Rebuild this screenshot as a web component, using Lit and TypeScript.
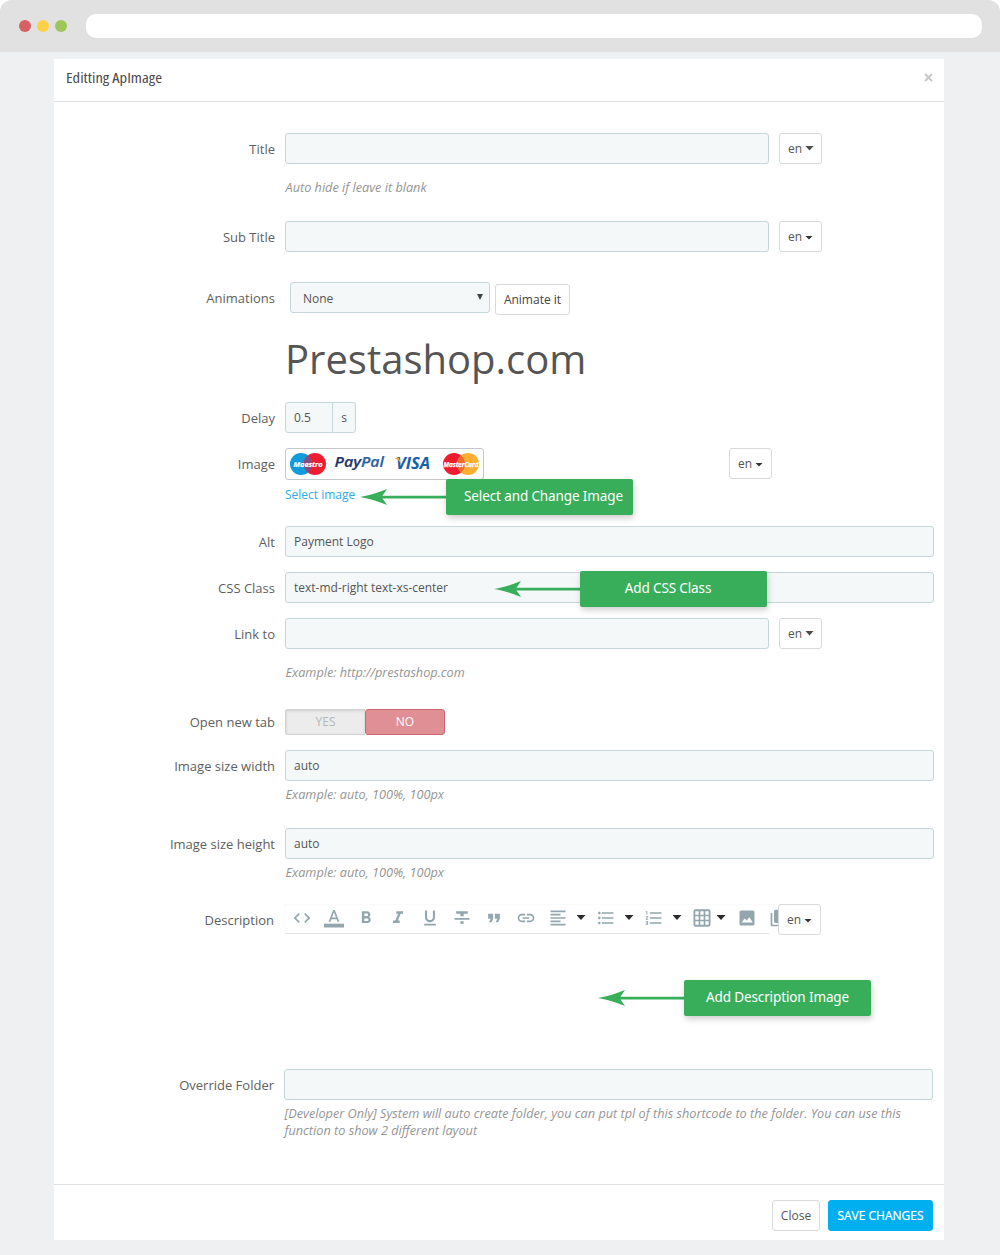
import { LitElement, html, svg, css, nothing } from "lit";
import { customElement, property } from "lit/decorators.js";

const ICONS: Record<string, unknown> = {
  code: svg`<path d="M9.4 16.6L4.8 12l4.6-4.6L8 6l-6 6 6 6 1.4-1.4zm5.2 0l4.6-4.6-4.6-4.6L16 6l6 6-6 6-1.4-1.4z"/>`,
  color: svg`<path d="M11 2.5L5.5 16.5h2.25l1.12-3h6.25l1.12 3h2.25L13 2.5h-2zm-1.38 9L12 5.2l2.38 6.3H9.62z"/><path d="M0 18.8h24v4.6H0z"/>`,
  bold: svg`<path d="M15.6 10.79c.97-.67 1.65-1.77 1.65-2.79 0-2.26-1.75-4-4-4H7v14h7.04c2.09 0 3.71-1.7 3.71-3.79 0-1.52-.86-2.82-2.15-3.42zM10 6.5h3c.83 0 1.5.67 1.5 1.5s-.67 1.5-1.5 1.5h-3v-3zm3.5 9H10v-3h3.5c.83 0 1.5.67 1.5 1.5s-.67 1.5-1.5 1.5z"/>`,
  italic: svg`<path d="M10 4v3h2.21l-3.42 8H6v3h8v-3h-2.21l3.42-8H18V4z"/>`,
  underline: svg`<path d="M12 17c3.31 0 6-2.69 6-6V3h-2.5v8c0 1.93-1.57 3.5-3.5 3.5S8.5 12.93 8.5 11V3H6v8c0 3.31 2.69 6 6 6zm-7 2v2h14v-2H5z"/>`,
  strike: svg`<path d="M10 19h4v-3h-4v3zM5 4v3h5v3h4V7h5V4H5zM3 14h18v-2H3v2z"/>`,
  quote: svg`<path d="M6 17h3l2-4V7H5v6h3zm8 0h3l2-4V7h-6v6h3z"/>`,
  link: svg`<path d="M3.9 12c0-1.71 1.39-3.1 3.1-3.1h4V7H7c-2.76 0-5 2.24-5 5s2.24 5 5 5h4v-1.9H7c-1.71 0-3.1-1.39-3.1-3.1zM8 13h8v-2H8v2zm9-6h-4v1.9h4c1.71 0 3.1 1.39 3.1 3.1s-1.39 3.1-3.1 3.1h-4V17h4c2.76 0 5-2.24 5-5s-2.24-5-5-5z"/>`,
  align: svg`<path d="M15 15H3v2h12v-2zm0-8H3v2h12V7zM3 13h18v-2H3v2zm0 8h18v-2H3v2zM3 3v2h18V3H3z"/>`,
  bullets: svg`<path d="M4 10.5c-.83 0-1.5.67-1.5 1.5s.67 1.5 1.5 1.5 1.5-.67 1.5-1.5-.67-1.5-1.5-1.5zm0-6c-.83 0-1.5.67-1.5 1.5S3.17 7.5 4 7.5 5.5 6.83 5.5 6 4.83 4.5 4 4.5zm0 12c-.83 0-1.5.68-1.5 1.5s.68 1.5 1.5 1.5 1.5-.68 1.5-1.5-.67-1.5-1.5-1.5zM7 19h14v-2H7v2zm0-6h14v-2H7v2zm0-8v2h14V5H7z"/>`,
  numbers: svg`<path d="M2 17h2v.5H3v1h1v.5H2v1h3v-4H2v1zm1-9h1V4H2v1h1v3zm-1 3h1.8L2 13.1v.9h3v-1H3.2L5 10.9V10H2v1zm5-6v2h14V5H7zm0 14h14v-2H7v2zm0-6h14v-2H7v2z"/>`,
  table: svg`<path fill-rule="evenodd" d="M4 1.6h16a2.2 2.2 0 0 1 2.2 2.2v16.4a2.2 2.2 0 0 1-2.2 2.2H4a2.2 2.2 0 0 1-2.2-2.2V3.8A2.2 2.2 0 0 1 4 1.6zM4 4v4h4V4zm6 0v4h4V4zm6 0v4h4V4zM4 10v4h4v-4zm6 0v4h4v-4zm6 0v4h4v-4zM4 16v4h4v-4zm6 0v4h4v-4zm6 0v4h4v-4z"/>`,
  image: svg`<path fill-rule="evenodd" d="M21 19V5c0-1.1-.9-2-2-2H5c-1.1 0-2 .9-2 2v14c0 1.1.9 2 2 2h14c1.1 0 2-.9 2-2zM5.5 17.5l3.6-5 2.5 2.6 3.2-3.9 4.2 6.3z"/>`,
  media: svg`<path d="M4 6H2v14c0 1.1.9 2 2 2h14v-2H4V6zm16-4H8c-1.1 0-2 .9-2 2v12c0 1.1.9 2 2 2h12c1.1 0 2-.9 2-2V4c0-1.1-.9-2-2-2z"/>`,
};

@customElement("lang-button")
class LangButton extends LitElement {
  @property({ type: Boolean }) large = false;
  static styles = css`
    :host { display: block; flex: none; }
    .btn {
      box-sizing: border-box; width: 43px; height: 31px; padding: 0 7px 0 8px;
      display: flex; align-items: center; gap: 3px;
      font: 12px/29px "Open Sans", sans-serif; color: #555;
      background: #fff; border: 1px solid #d6dadd; border-radius: 3px;
    }
    .text { flex: none; width: 14px; }
    .caret { flex: none; width: 8px; height: 4px; margin-top: 2px; background: #333; clip-path: polygon(0 0, 100% 0, 50% 100%); }
    .large { width: 9px; height: 5px; margin-top: -1px; background: #4c4c4c; }
  `;
  render() {
    return html`<div class="btn"><span class="text">en</span><span class="caret ${this.large ? "large" : ""}"></span></div>`;
  }
}

@customElement("note-callout")
class NoteCallout extends LitElement {
  @property() text = "";
  @property({ type: Number }) shift = 0;
  static styles = css`
    :host { display: flex; align-items: center; position: absolute; z-index: 1; }
    .arrow { display: block; width: 86px; height: 18px; }
    .box {
      box-sizing: border-box; width: 187px; height: 36px; border-radius: 2px; background: #38ae5b;
      box-shadow: 1px 3px 6px rgba(0, 0, 0, 0.2); color: #fff; text-align: center;
      font: 13.5px/35px "Noto Sans", sans-serif; letter-spacing: -0.12px; white-space: nowrap;
    }
    .text { position: relative; }
  `;
  render() {
    return html`
      <svg class="arrow" viewBox="0 0 86 18"><path fill="#38ae5b" d="M0 9C10 7.4 18 4.500 27 1L22.500 7.700H86v2.700H22.500L27 17C18 13.500 10 10.600 0 9z"/></svg>
      <div class="box"><span class="text" style="left:${this.shift}px">${this.text}</span></div>`;
  }
}

@customElement("editor-toolbar")
class EditorToolbar extends LitElement {
  static styles = css`
    :host { display: block; }
    .bar {
      box-sizing: border-box; display: flex; align-items: center; width: 494px; height: 30px; padding: 0 0 4px 1px;
      overflow: hidden; background: linear-gradient(#e4e7e8, #e4e7e8) 0 100% / 484px 1px no-repeat;
      border-top: 1px solid #fafafa; border-left: 1px solid #fafafa;
    }
    .tool { flex: none; width: 32px; display: flex; justify-content: center; }
    .tool svg { width: 20px; height: 20px; fill: #93a6ad; display: block; }
    .drop { flex: none; width: 14px; margin-right: 2px; display: flex; justify-content: center; }
    .drop i { width: 9px; height: 5px; background: #2b2b2b; clip-path: polygon(0 0, 100% 0, 50% 100%); }
    .tight { margin-left: -4px; }
    .picture { margin-left: 1px; }
  `;
  tool(name: string, extra = "") {
    return html`<span class="tool ${extra}"><svg viewBox="0 0 24 24">${ICONS[name]}</svg></span>`;
  }
  drop(extra = "") {
    return html`<span class="drop ${extra}"><i></i></span>`;
  }
  render() {
    return html`<div class="bar">
      ${["code", "color", "bold", "italic", "underline", "strike", "quote", "link"].map((n) => this.tool(n))}
      ${this.tool("align")}${this.drop()}${this.tool("bullets")}${this.drop()}${this.tool("numbers")}${this.drop()}
      ${this.tool("table")}${this.drop("tight")}${this.tool("image", "picture")}${this.tool("media")}
    </div>`;
  }
}

@customElement("app-root")
class AppRoot extends LitElement {
  static styles = css`
    :host { display: block; height: 1255px; background: #fff; font: 12px/17px "Open Sans", sans-serif; color: #555; }
    .page { display: flex; flex-direction: column; height: 1255px; background: #eff0f2; border-radius: 12px 12px 0 0; overflow: hidden; }
    .browser { flex: none; box-sizing: border-box; height: 52px; background: #e1e1e1; display: flex; align-items: center; gap: 6px; padding: 0 18px 0 19px; }
    .dot { width: 12px; height: 12px; border-radius: 50%; }
    .red { background: #d76062; }
    .yellow { background: #fed148; }
    .green { background: #9dc859; }
    .url { flex: 1; height: 24px; margin-left: 13px; border-radius: 10px; background: #fff; }
    .modal { box-sizing: border-box; width: 890px; height: 1181px; margin: 7px 0 0 54px; background: #fff; display: flex; flex-direction: column; }
    .head { box-sizing: border-box; height: 43px; border-bottom: 1px solid #dfe1e3; display: flex; align-items: center; justify-content: space-between; padding: 0 11px 5px 12px; }
    .title { width: 98px; height: 22px; display: block; fill: #4a4a4a; font: 14px "Open Sans", sans-serif; font-stretch: 75%; }
    .close { width: 9px; height: 9px; stroke: #c8c8c8; stroke-width: 2; }
    .form {
      flex: 1; padding-top: 31px; display: grid;
      grid-template-rows: 88px 61px 56px 64px 46px 78px 46px 46px 91px 41px 78px 76px 165px 1fr;
    }
    .row { display: grid; grid-template-columns: 221px 649px; column-gap: 10px; align-items: start; }
    .inset { grid-template-columns: 220px 649px; }
    .label { text-align: right; font-size: 13px; line-height: 33px; color: #606060; }
    .low { line-height: 27px; }
    .body { position: relative; }
    .line { display: flex; gap: 10px; }
    .input { box-sizing: border-box; width: 649px; height: 31px; padding: 0 8px; background: #f4f8f9; border: 1px solid #c7d6db; border-radius: 3px; line-height: 30px; }
    .short { width: 484px; }
    .hint { width: 612px; font-style: italic; color: #959595; margin-top: 5px; padding-left: 0.5px; transform: scaleX(1.058); transform-origin: 0 0; }
    .far { margin-top: 15px; }
    .anim { gap: 5px; padding-left: 5px; }
    .select { width: 200px; padding: 1px 6px 0 12px; display: flex; justify-content: space-between; }
    .select i { width: 6px; height: 6px; margin-top: 10px; background: #444; clip-path: polygon(0 0, 100% 0, 50% 100%); }
    .btn { box-sizing: border-box; height: 31px; padding: 0; text-align: center; line-height: 30px; background: #fff; border: 1px solid #d6dadd; border-radius: 3px; white-space: nowrap; }
    .animate { width: 75px; margin-top: 2px; color: #444; }
    .demo { margin: 0; font-size: 40px; line-height: 42px; font-weight: 400; white-space: nowrap; }
    .delay { width: 48px; border-radius: 3px 0 0 3px; }
    .unit { width: 24px; padding: 0; text-align: center; margin-left: -11px; border-radius: 0 3px 3px 0; }
    .picture { justify-content: space-between; width: 487px; }
    .thumb { box-sizing: border-box; width: 199px; height: 32px; border: 1px solid #c4c8ca; border-radius: 3px; }
    .thumb svg { display: block; width: 197px; height: 30px; }
    .link { color: #2eacea; margin-top: 6px; }
    .switch { display: flex; width: 160px; height: 26px; box-sizing: border-box; line-height: 24px; text-align: center; }
    .yes { box-sizing: border-box; width: 80px; border: 1px solid #d2d2d2; border-right: 0; border-radius: 3px 0 0 3px; background: #ececec; color: #b7b7b7; box-shadow: inset 0 1px 3px rgba(0, 0, 0, 0.12); }
    .no { box-sizing: border-box; width: 80px; border: 1px solid #cd6872; border-radius: 3px; background: #e08f95; color: #fff; }
    .editor { gap: 0; }
    .foot { box-sizing: border-box; height: 56px; border-top: 1px solid #dfe1e3; display: flex; justify-content: flex-end; gap: 8px; padding: 15px 11px 0 0; }
    .dismiss { width: 48px; }
    .save { width: 105px; background: #00aff0; border-color: #00aff0; color: #fff; -webkit-text-stroke: 0.2px #fff; }
    .n1 { left: 75px; top: 31px; }
    .n2 { left: 209px; top: -1px; }
    .n3 { left: 314px; top: 76px; }
  `;

  row(label: string, body: unknown, inset = false, low = false) {
    return html`<div class="row ${inset ? "inset" : ""}">
      <div class="label ${low ? "low" : ""}">${label}</div><div class="body">${body}</div>
    </div>`;
  }
  field(value = "") {
    return html`<div class="input">${value || nothing}</div>`;
  }
  translatable(large = false) {
    return html`<div class="line"><div class="input short"></div><lang-button ?large=${large}></lang-button></div>`;
  }
  hint(text: string, far = false) {
    return html`<div class="hint ${far ? "far" : ""}">${text}</div>`;
  }
  payments() {
    return svg`<svg viewBox="0 0 197 30" font-family="Open Sans, sans-serif" font-style="italic" font-weight="700">
      <circle cx="15" cy="15" r="11" fill="#0f9bdc"/><circle cx="29" cy="15" r="11" fill="#ed1c2e"/>
      <path d="M22 6.500a11 11 0 0 1 0 17a11 11 0 0 1 0-17z" fill="#8c4a7c"/>
      <text x="7.500" y="17.800" font-size="7.500" fill="#fff" stroke="#fff" stroke-width=".2" textLength="29" lengthAdjust="spacingAndGlyphs">Maestro</text>
      <text x="48.500" y="18" font-size="14" font-weight="600" fill="#1f3567" stroke="#1f3567" stroke-width=".2" textLength="26.500" lengthAdjust="spacingAndGlyphs">Pay</text>
      <text x="75" y="18" font-size="14" font-weight="600" fill="#29639f" stroke="#29639f" stroke-width=".2" textLength="23" lengthAdjust="spacingAndGlyphs">Pal</text>
      <text x="110" y="20" font-size="15.500" fill="#1561a5" textLength="34" lengthAdjust="spacingAndGlyphs">VISA</text>
      <path d="M108 8.700h5l2.300 6.500c-1.600-3-4-5.200-7.300-6.500z" fill="#f3a32c"/>
      <circle cx="168" cy="15" r="11" fill="#ed1c2e"/><circle cx="182" cy="15" r="11" fill="#fcae32"/>
      <path d="M175 6.500a11 11 0 0 1 0 17a11 11 0 0 1 0-17z" fill="#f2682f"/>
      <text x="157.500" y="17.500" font-size="6.900" fill="#fff" stroke="#fff" stroke-width=".25" textLength="35" lengthAdjust="spacingAndGlyphs">MasterCard</text>
    </svg>`;
  }

  render() {
    return html`<div class="page">
      <div class="browser">
        <span class="dot red"></span><span class="dot yellow"></span><span class="dot green"></span><span class="url"></span>
      </div>
      <div class="modal">
        <div class="head">
          <svg class="title" viewBox="0 0 98 22"><text x="0" y="16" textLength="96" lengthAdjust="spacingAndGlyphs">Editting ApImage</text></svg>
          <svg class="close" viewBox="0 0 9 9"><path d="M1 1l7 7M8 1L1 8"/></svg>
        </div>
        <div class="form">
          ${this.row("Title", html`${this.translatable(true)}${this.hint("Auto hide if leave it blank", true)}`)}
          ${this.row("Sub Title", this.translatable())}
          ${this.row("Animations", html`<div class="line anim"><div class="input select">None<i></i></div><div class="btn animate">Animate it</div></div>`)}
          ${this.row("", html`<h1 class="demo">Prestashop.com</h1>`)}
          ${this.row("Delay", html`<div class="line"><div class="input delay">0.5</div><div class="input unit">s</div></div>`)}
          ${this.row("Image", html`<div class="line picture"><div class="thumb">${this.payments()}</div><lang-button></lang-button></div>
            <div class="link">Select image</div>
            <note-callout class="n1" text="Select and Change Image" shift="4"></note-callout>`)}
          ${this.row("Alt", this.field("Payment Logo"))}
          ${this.row("CSS Class", html`${this.field("text-md-right text-xs-center")}<note-callout class="n2" text="Add CSS Class" shift="-5.5"></note-callout>`)}
          ${this.row("Link to", html`${this.translatable(true)}${this.hint("Example: http://prestashop.com", true)}`)}
          ${this.row("Open new tab", html`<div class="switch"><span class="yes">YES</span><span class="no">NO</span></div>`, false, true)}
          ${this.row("Image size width", html`${this.field("auto")}${this.hint("Example: auto, 100%, 100px")}`)}
          ${this.row("Image size height", html`${this.field("auto")}${this.hint("Example: auto, 100%, 100px")}`)}
          ${this.row("Description", html`<div class="line editor"><editor-toolbar></editor-toolbar><lang-button></lang-button></div>
            <note-callout class="n3" text="Add Description Image" shift="0"></note-callout>`, true)}
          ${this.row("Override Folder", html`${this.field()}${this.hint("[Developer Only] System will auto create folder, you can put tpl of this shortcode to the folder. You can use this function to show 2 different layout")}`, true)}
        </div>
        <div class="foot"><div class="btn dismiss">Close</div><div class="btn save">SAVE CHANGES</div></div>
      </div>
    </div>`;
  }
}
